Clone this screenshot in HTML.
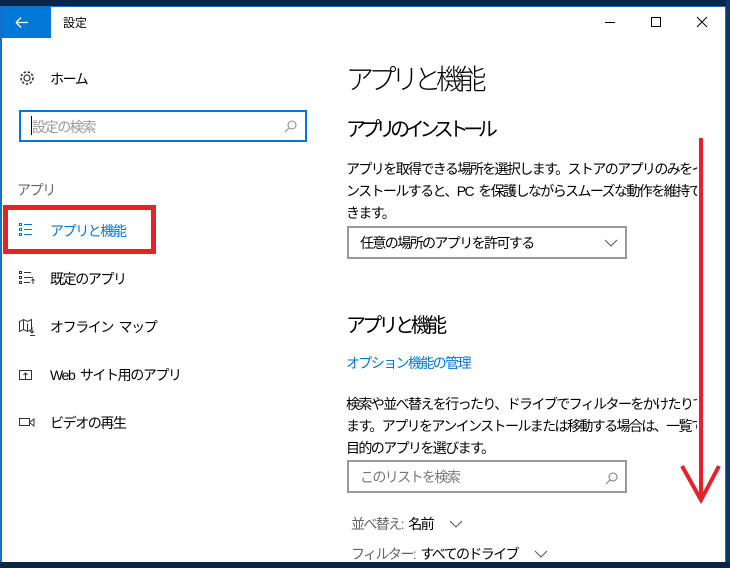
<!DOCTYPE html>
<html><head><meta charset="utf-8"><style>
*{margin:0;padding:0;box-sizing:border-box}
body{width:730px;height:568px;background:#fff;position:relative;overflow:hidden;font-family:"Liberation Sans","Noto Sans CJK JP",sans-serif;color:#000}
.abs{position:absolute;white-space:nowrap}
.side{font-size:14px;letter-spacing:-1.4px}
.clip{position:absolute;left:346px;top:0;width:351px;height:562px;overflow:hidden}
.b{font-size:14px;letter-spacing:-1.6px;word-spacing:3px}
.box{position:absolute;border:2px solid #999;background:#fff}
</style></head><body>
<div class="abs" style="left:0;top:0;width:730px;height:6px;background:#0b2548"></div>
<div class="abs" style="left:0;top:6px;width:726px;height:1px;background:#1a6fc8"></div>
<div class="abs" style="left:0;top:6px;width:2px;height:556px;background:#1a6fc8"></div>
<div class="abs" style="left:725px;top:6px;width:1px;height:556px;background:#1a6fc8"></div>
<div class="abs" style="left:726px;top:0;width:4px;height:568px;background:#0b3a6a"></div>
<div class="abs" style="left:0;top:562px;width:730px;height:6px;background:#0b2548"></div>

<div class="abs" style="left:2px;top:7px;width:49px;height:31px;background:#0078d7"><svg width="49" height="31"><path d="M14 15.5h12M14 15.5l5-5M14 15.5l5 5" stroke="#fff" stroke-width="1.3" fill="none"/></svg></div>
<div class="abs" style="left:63px;top:14px;font-size:12px">設定</div>
<svg class="abs" style="left:560px;top:12px" width="160" height="20"><path d="M45 10.5h10" stroke="#000"/><rect x="91.5" y="5.5" width="9" height="9" fill="none" stroke="#000"/><path d="M137 5l10 10M147 5l-10 10" stroke="#000"/></svg>

<svg class="abs" style="left:18px;top:69px" width="18" height="18"><circle cx="9" cy="9" r="3" fill="none" stroke="#333" stroke-width="1.2"/><circle cx="9" cy="9" r="6" fill="none" stroke="#333" stroke-width="1.6" stroke-dasharray="2.4 1.7"/></svg>
<div class="abs side" style="left:50px;top:69px">ホーム</div>
<div class="abs" style="left:19px;top:110px;width:288px;height:32px;border:2px solid #0078d7"></div>
<div class="abs" style="left:31px;top:116px;width:1px;height:19px;background:#000"></div>
<div class="abs side" style="left:32px;top:117px;color:#999">設定の検索</div>
<svg class="abs" style="left:284px;top:119px" width="14" height="14"><circle cx="8" cy="6" r="4" fill="none" stroke="#888"/><path d="M5 9l-4 4" stroke="#888"/></svg>
<div class="abs side" style="left:17px;top:180px;color:#666">アプリ</div>
<div class="abs" style="left:3px;top:205px;width:153px;height:49px;border:5px solid #e8202a"></div>
<svg class="abs" style="left:18px;top:222px" width="16" height="16"><g fill="none" stroke="#0078d7"><rect x="1.5" y="1.5" width="2" height="2"/><rect x="1.5" y="6.5" width="2" height="2"/><rect x="1.5" y="11.5" width="2" height="2"/><path d="M6 2.5h8M6 7.5h8M6 12.5h8"/></g></svg>
<div class="abs side" style="left:50px;top:221px;color:#0078d7">アプリと機能</div>
<svg class="abs" style="left:18px;top:270px" width="18" height="16"><g fill="none" stroke="#333"><rect x="1.5" y="1.5" width="2" height="2"/><rect x="1.5" y="6.5" width="2" height="2"/><rect x="1.5" y="11.5" width="2" height="2"/><path d="M6 2.5h7M6 7.5h9M6 12.5h6M15 9v5M13.5 10.5l1.5-1.5 1.5 1.5"/></g></svg>
<div class="abs side" style="left:50px;top:269px">既定のアプリ</div>
<svg class="abs" style="left:18px;top:318px" width="18" height="18"><g fill="none" stroke="#333"><path d="M1.5 3.5v10l4-2 4 2 4-2v-10l-4 2-4-2z M5.5 1.5v10M9.5 5.5v8"/><path d="M14 9v6M12 13l2 2 2-2M12 17.5h5"/></g></svg>
<div class="abs side" style="left:50px;top:317px;word-spacing:3px">オフライン マップ</div>
<svg class="abs" style="left:18px;top:367px" width="16" height="16"><g fill="none" stroke="#333"><path d="M1.5 3.5h12v9h-12zM7.5 12v-6M5.5 8l2-2 2 2"/></g></svg>
<div class="abs side" style="left:50px;top:365px;word-spacing:3px">Web サイト用のアプリ</div>
<svg class="abs" style="left:18px;top:415px" width="18" height="16"><g fill="none" stroke="#333"><rect x="1.5" y="3.5" width="10" height="7"/><path d="M12 7l4-3v7l-4-3"/></g></svg>
<div class="abs side" style="left:50px;top:413px">ビデオの再生</div>

<div class="clip">
 <div class="abs" style="left:0;top:58px;font-size:28px;letter-spacing:-5.5px;font-weight:300">アプリと機能</div>
 <div class="abs" style="left:0;top:113px;font-size:20px;letter-spacing:-5.3px">アプリのインストール</div>
 <div class="abs b" style="left:0;top:158px;line-height:22px">アプリを取得できる場所を選択します。ストアのアプリのみをイ<br>ンストールすると、PC を保護しながらスムーズな動作を維持で<br>きます。</div>
 <div class="box" style="left:1px;top:226px;width:280px;height:33px"><span class="abs b" style="left:11px;top:5px">任意の場所のアプリを許可する</span><svg class="abs" style="left:255px;top:10px" width="14" height="10"><path d="M1 2l6 6 6-6" stroke="#555" fill="none"/></svg></div>
 <div class="abs" style="left:0;top:309px;font-size:20px;letter-spacing:-3.8px">アプリと機能</div>
 <div class="abs b" style="left:0;top:353px;color:#0078d7">オプション機能の管理</div>
 <div class="abs b" style="left:0;top:393px;line-height:22px">検索や並べ替えを行ったり、ドライブでフィルターをかけたりでき<br>ます。アプリをアンインストールまたは移動する場合は、一覧で<br>目的のアプリを選びます。</div>
 <div class="box" style="left:1px;top:460px;width:280px;height:33px"><span class="abs b" style="left:11px;top:5px;color:#777">このリストを検索</span><svg class="abs" style="left:256px;top:9px" width="14" height="14"><circle cx="8" cy="6" r="4" fill="none" stroke="#777"/><path d="M5 9l-4 4" stroke="#777"/></svg></div>
 <div class="abs b" style="left:5px;top:514px;color:#666">並べ替え: <span style="color:#000">名前</span>&nbsp;&nbsp; <svg width="14" height="10"><path d="M1 2l6 6 6-6" stroke="#555" fill="none"/></svg></div>
 <div class="abs b" style="left:5px;top:544px;color:#666">フィルター: <span style="color:#000">すべてのドライブ</span>&nbsp;&nbsp; <svg width="14" height="10"><path d="M1 2l6 6 6-6" stroke="#555" fill="none"/></svg></div>
</div>
<svg class="abs" style="left:0;top:0" width="730" height="568"><g stroke="#e8202a" stroke-width="4" fill="none"><path d="M701 138V500"/><path d="M682 466l19 34 18-34"/></g></svg>
</body></html>
